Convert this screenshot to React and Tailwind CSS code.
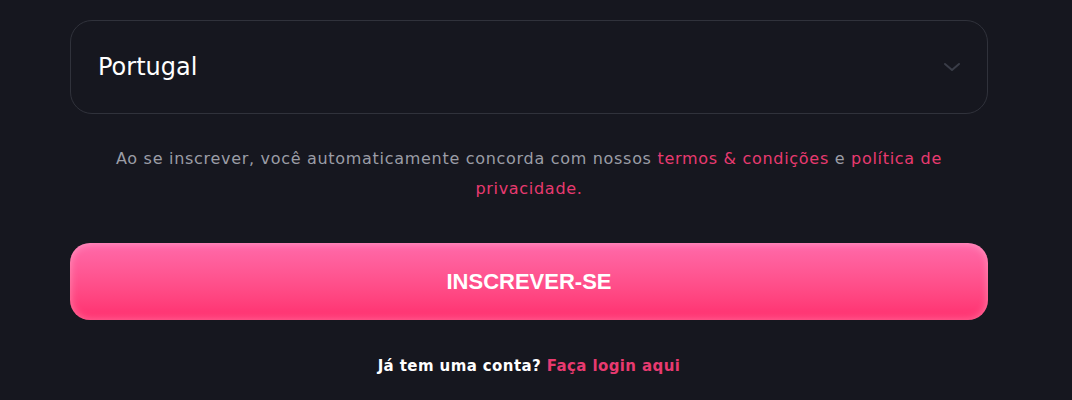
import React, { useState } from 'react';

const ChevronDown = () => (
    <svg width="18" height="10" viewBox="0 0 18 10" fill="none" className="text-[#3a3d48]">
        <path d="M2 2l7 6 7-6" stroke="currentColor" strokeWidth="2" strokeLinecap="round" strokeLinejoin="round" />
    </svg>
);

const App = () => {
    const [country] = useState('Portugal');

    return (
        <div className="min-h-[400px] w-full bg-[#16171f] font-['DejaVu_Sans','Liberation_Sans',sans-serif]">
            <div className="ml-[70px] w-[918px] pt-5">
                {/* country select */}
                <div className="flex h-[94px] items-center justify-between rounded-[22px] border border-[#30323b] pl-[27px] pr-[26px]">
                    <span className="text-[24px] text-white">{country}</span>
                    <ChevronDown />
                </div>

                {/* terms */}
                <div className="mx-auto mt-[30px] w-[850px] text-center text-[16px] leading-[30px] tracking-[0.7px] text-[#9b9da6]">
                    <p>
                        Ao se inscrever, você automaticamente concorda com nossos{' '}
                        <a className="text-[#e83a70]">termos &amp; condições</a>
                        {' e '}
                        <a className="text-[#e83a70]">política de</a>
                    </p>
                    <p>
                        <a className="text-[#e83a70]">privacidade.</a>
                    </p>
                </div>

                {/* submit */}
                <button
                    type="button"
                    className="mt-[39px] flex h-[77px] w-full items-center justify-center rounded-[20px] bg-gradient-to-b from-[#ff6aaa] to-[#ff2d6e] shadow-[inset_0_0_8px_rgba(255,255,255,0.35)]"
                >
                    <span className="font-['Liberation_Sans',sans-serif] text-[22px] font-bold text-white">INSCREVER-SE</span>
                </button>

                {/* login */}
                <p className="mt-[34px] text-center text-[15px] leading-[24px] font-semibold tracking-[0.4px] text-white">
                    Já tem uma conta? <a className="text-[#e83a70]">Faça login aqui</a>
                </p>
            </div>
        </div>
    );
};

export default App;
